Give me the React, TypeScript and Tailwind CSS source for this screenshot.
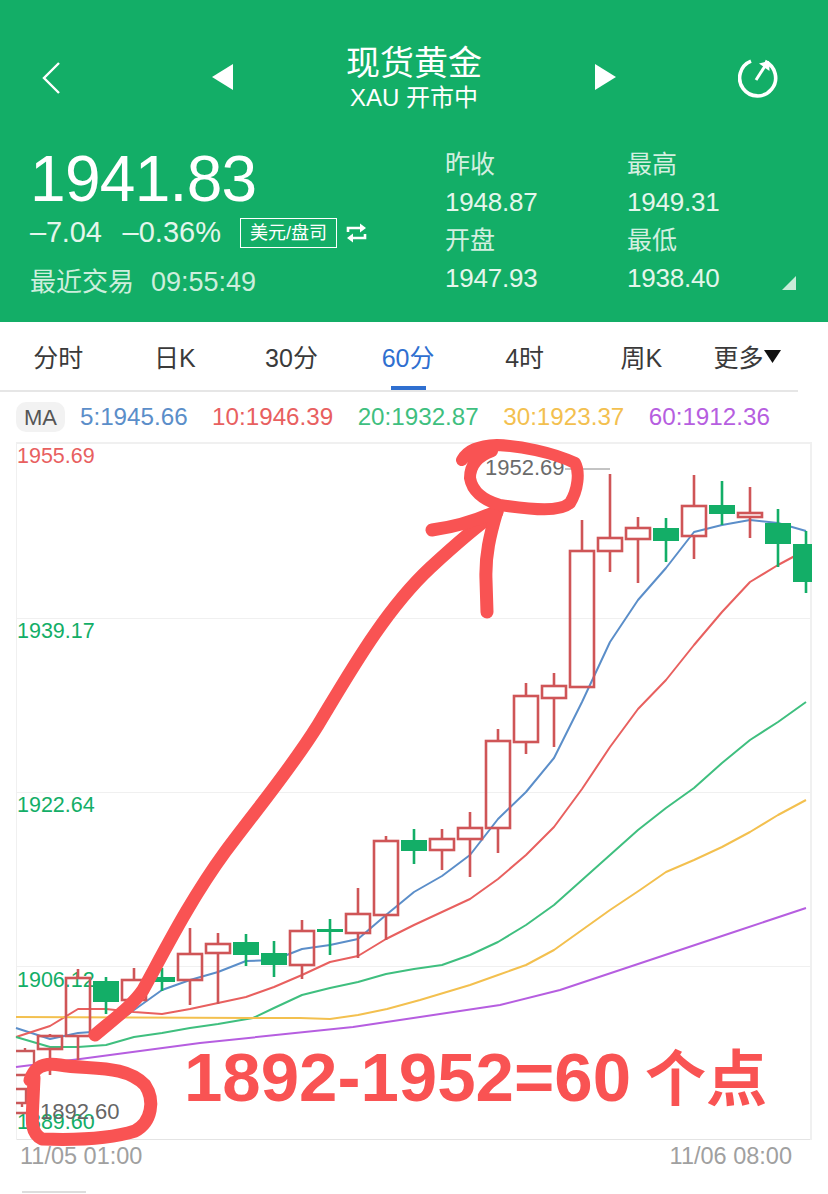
const latin = "font-['Liberation_Sans','Noto_Sans_CJK_SC',sans-serif]";

type Candle = { x: number; top: number; bottom: number; high: number; low: number; down?: boolean };

// page coordinates, read off the reference
const candles: Candle[] = [
  { x: 50, top: 1036, bottom: 1049, high: 1034, low: 1075 },
  { x: 78, top: 978, bottom: 1036, high: 969, low: 1060 },
  { x: 106, top: 981, bottom: 1002, high: 977, low: 1014, down: true },
  { x: 134, top: 980, bottom: 1000, high: 968, low: 1004 },
  { x: 162, top: 977, bottom: 982, high: 968, low: 991, down: true },
  { x: 190, top: 954, bottom: 980, high: 928, low: 1005 },
  { x: 218, top: 944, bottom: 953, high: 933, low: 1004 },
  { x: 246, top: 942, bottom: 955, high: 934, low: 966, down: true },
  { x: 274, top: 953, bottom: 965, high: 941, low: 977, down: true },
  { x: 302, top: 931, bottom: 965, high: 920, low: 979 },
  { x: 330, top: 929, bottom: 932, high: 919, low: 955, down: true },
  { x: 358, top: 914, bottom: 933, high: 888, low: 958 },
  { x: 386, top: 841, bottom: 915, high: 836, low: 940 },
  { x: 414, top: 840, bottom: 851, high: 829, low: 864, down: true },
  { x: 442, top: 839, bottom: 850, high: 829, low: 870 },
  { x: 470, top: 828, bottom: 839, high: 812, low: 877 },
  { x: 498, top: 741, bottom: 828, high: 729, low: 853 },
  { x: 526, top: 696, bottom: 742, high: 683, low: 754 },
  { x: 554, top: 686, bottom: 698, high: 673, low: 747 },
  { x: 582, top: 551, bottom: 687, high: 520, low: 687 },
  { x: 610, top: 538, bottom: 551, high: 474, low: 572 },
  { x: 638, top: 528, bottom: 539, high: 517, low: 583 },
  { x: 666, top: 528, bottom: 541, high: 518, low: 562, down: true },
  { x: 694, top: 506, bottom: 536, high: 475, low: 559 },
  { x: 722, top: 505, bottom: 514, high: 481, low: 525, down: true },
  { x: 750, top: 513, bottom: 517, high: 487, low: 538 },
  { x: 778, top: 523, bottom: 544, high: 509, low: 567, down: true },
];

const maLines = [
  {
    color: '#5b8ec9',
    points:
      '16,1028 50,1039 78,1033 106,1031 134,1010 162,990 190,980 218,972 246,961 274,960 302,949 330,945 358,939 386,915 414,892 442,876 470,855 498,819 526,792 554,758 582,702 610,642 638,600 666,568 694,532 722,525 750,520 778,523 806,531',
  },
  {
    color: '#e8605f',
    points:
      '16,1037 50,1026 78,1009 106,1009 134,1012 162,1014 190,1009 218,1003 246,997 274,987 302,975 330,962 358,956 386,939 414,925 442,912 470,899 498,879 526,855 554,827 582,789 610,747 638,709 666,680 694,645 722,612 750,582 778,565 806,550',
  },
  {
    color: '#3fbf7f',
    points:
      '16,1037 50,1047 78,1047 106,1045 134,1037 162,1033 190,1028 218,1024 253,1018 274,1008 302,995 330,988 358,982 386,974 414,969 442,965 470,955 498,942 526,925 554,905 582,880 610,855 638,830 666,808 694,788 722,763 750,740 778,722 806,702',
  },
  {
    color: '#f3c04f',
    points:
      '16,1017 253,1018 300,1018 330,1019 358,1015 387,1009 420,1000 470,985 498,975 526,965 554,950 582,930 610,910 640,890 666,872 694,860 722,847 750,832 778,815 806,800',
  },
  {
    color: '#b65ee0',
    points: '16,1067 80,1059 200,1043 353,1027 420,1017 500,1005 560,990 620,970 680,950 740,930 806,908',
  },
];

const priceLabels = [
  { text: '1955.69', cls: 'top-[-1px] text-[#e8605f]' },
  { text: '1939.17', cls: 'top-[174px] text-[#13ae67]' },
  { text: '1922.64', cls: 'top-[348px] text-[#13ae67]' },
  { text: '1906.12', cls: 'top-[523px] text-[#13ae67]' },
  { text: '1889.60', cls: 'top-[665px] text-[#13ae67]' },
];

const tabs = ['分时', '日K', '30分', '60分', '4时', '周K'];

const maValues = [
  { text: '5:1945.66', cls: 'text-[#5b8ec9]' },
  { text: '10:1946.39', cls: 'text-[#e8605f]' },
  { text: '20:1932.87', cls: 'text-[#3fbf7f]' },
  { text: '30:1923.37', cls: 'text-[#f3c04f]' },
  { text: '60:1912.36', cls: 'text-[#b65ee0]' },
];

function Stat({ label, value }: { label: string; value: string }) {
  return (
    <div>
      <div className="h-[38px] text-[25px] leading-[38px] text-[#d3efe0]">{label}</div>
      <div className="h-[38px] text-[26px] leading-[38px] tracking-[-0.2px] text-[#e4f6ec]">{value}</div>
    </div>
  );
}

function Chart() {
  return (
    <div className="relative mx-[16px] h-[698px] w-[796px] border-t-2 border-r-2 border-l border-[#f0f0f0]">
      <div className="absolute inset-x-0 top-[174px] h-px bg-[#f0f0f0]" />
      <div className="absolute inset-x-0 top-[348px] h-px bg-[#f0f0f0]" />
      <div className="absolute inset-x-0 top-[522px] h-px bg-[#f0f0f0]" />
      <div className="absolute inset-x-0 bottom-0 h-px bg-[#e4e4e4]" />

      {priceLabels.map((label) => (
        <div key={label.text} className={`absolute left-0 text-[21.5px] leading-[26px] ${label.cls}`}>
          {label.text}
        </div>
      ))}
      <div className="absolute top-[11px] left-[468px] text-[22px] leading-[26px] text-[#6b6b6b]">1952.69</div>
      <div className="absolute top-[655px] left-[23px] text-[22px] leading-[26px] text-[#666]">1892.60</div>

      <svg className="absolute -top-[2px] -left-px overflow-visible" width="796" height="698" viewBox="16 442 796 698" fill="none">
        <path d="M565 469H610" stroke="#888" strokeWidth="1" />
        {maLines.map((line) => (
          <polyline key={line.color} points={line.points} stroke={line.color} strokeWidth="2" strokeLinejoin="round" />
        ))}
        {/* candles cut off by the left edge */}
        <path d="M16 1051H34V1075H16M25 1048V1051M16 1089H26V1103H16M22 1103V1107M16 1113H28" stroke="#c9585a" strokeWidth="2.4" />
        {candles.map((c) =>
          c.down ? (
            <g key={c.x}>
              <path d={`M${c.x} ${c.high}V${c.low}`} stroke="#13ae67" strokeWidth="2.6" />
              <rect x={c.x - 13} y={c.top} width="26" height={c.bottom - c.top} fill="#13ae67" />
            </g>
          ) : (
            <g key={c.x} stroke="#cf5557" strokeWidth="2.6">
              <path d={`M${c.x} ${c.high}V${c.top}M${c.x} ${c.bottom}V${c.low}`} />
              <rect x={c.x - 12} y={c.top} width="24" height={c.bottom - c.top} />
            </g>
          ),
        )}
        <path d="M806 531V593" stroke="#13ae67" strokeWidth="2.6" />
        <rect x="793" y="544" width="19" height="38" fill="#13ae67" />

        <g stroke="#f95353" strokeLinecap="round" strokeLinejoin="round" fill="none">
          {/* arrow */}
          <path
            d="M95 1035 C115 1018 132 1006 143 990 C165 950 190 900 225 852 C260 805 290 770 318 725 C350 672 385 610 430 568 C455 545 478 525 497 512"
            strokeWidth="13"
          />
          <path d="M432 530 C455 527 478 520 497 511 C490 535 485 555 486 580 L487 612" strokeWidth="13" />
          {/* circle round the high */}
          <path
            d="M462 460 C468 450 478 446 497 445 C520 446 552 452 575 463 C580 472 578 490 570 503 C560 512 535 510 500 505 C482 500 472 490 470 478 C470 465 478 456 492 451"
            strokeWidth="12"
          />
          {/* circle round the low */}
          <path
            d="M30 1080 C34 1068 43 1062 60 1065 C90 1070 125 1064 145 1085 C155 1100 152 1122 135 1131 C110 1139 70 1140 42 1139 C30 1133 32 1120 33 1100 L34 1078"
            strokeWidth="13"
          />
        </g>
      </svg>

      <div className="absolute top-[596px] left-[167px] text-[69px] leading-[76px] font-bold whitespace-nowrap text-[#f95353]">
        1892-1952=60<span className="ml-[-3px] text-[61px]"> 个点</span>
      </div>
    </div>
  );
}

export default function App() {
  return (
    <div className={`h-[1194px] w-[828px] overflow-hidden bg-white ${latin}`}>
      <header className="h-[322px] bg-[#13ae67] text-white">
        <div className="flex h-[145px] items-start pt-[42px] pl-[41px]">
          <svg className="mt-[19px]" width="20" height="34" viewBox="0 0 20 34" fill="none">
            <path d="M18 2L3 17L18 32" stroke="#fff" strokeWidth="2.4" />
          </svg>
          <svg className="mt-[22px] ml-[151px]" width="22" height="26" viewBox="0 0 22 26">
            <path d="M21 0V26L0 13Z" fill="#fff" />
          </svg>
          <div className="ml-[110px] flex w-[140px] flex-col items-center">
            <div className="text-[34px] leading-[42px]">现货黄金</div>
            <div className="text-[24px] leading-[28px] whitespace-nowrap">XAU 开市中</div>
          </div>
          <svg className="mt-[22px] ml-[111px]" width="22" height="26" viewBox="0 0 22 26">
            <path d="M0 0V26L21 13Z" fill="#fff" />
          </svg>
          <svg className="mt-[16px] ml-[121px]" width="40" height="40" viewBox="0 0 40 40" fill="none">
            <path d="M27 3.5A18 18 0 1 1 13 3.2" stroke="#fff" strokeWidth="3.6" />
            <path d="M18 22L27 8" stroke="#fff" strokeWidth="3" />
            <path d="M21 5.5L31 3L31.5 13Z" fill="#fff" />
          </svg>
        </div>

        <div className="flex pl-[30px]">
          <div className="w-[415px]">
            <div className="text-[64px] leading-[68px] tracking-[-0.7px]">1941.83</div>
            <div className="mt-[2px] flex h-[36px] items-center text-[#e4f6ec]">
              <span className="text-[29px] tracking-[-0.2px]">–7.04</span>
              <span className="ml-[21px] text-[29px]">–0.36%</span>
              <span className="ml-[19px] flex h-[30px] w-[97px] items-center justify-center border border-white text-[18px] whitespace-nowrap text-white">
                美元/盘司
              </span>
              <svg className="ml-[8px]" width="23" height="20" viewBox="0 0 23 20" fill="none">
                <path d="M3 9V5H17M3 11" stroke="#fff" strokeWidth="2.6" />
                <path d="M15 0.5L21 5L15 9.5Z" fill="#fff" />
                <path d="M20 11V15H6" stroke="#fff" strokeWidth="2.6" />
                <path d="M8 10.5L2 15L8 19.5Z" fill="#fff" />
              </svg>
            </div>
            <div className="mt-[11px] flex h-[40px] items-center text-[#cdeedd]">
              <span className="text-[26px]">最近交易</span>
              <span className="ml-[17px] text-[27px]">09:55:49</span>
            </div>
          </div>
          <div className="w-[182px]">
            <Stat label="昨收" value="1948.87" />
            <Stat label="开盘" value="1947.93" />
          </div>
          <div>
            <Stat label="最高" value="1949.31" />
            <Stat label="最低" value="1938.40" />
          </div>
        </div>
        <div className="-mt-[26px] flex justify-end pr-[32px]">
          <svg width="14" height="14" viewBox="0 0 14 14">
            <path d="M14 0V14H0Z" fill="#c9ecd9" />
          </svg>
        </div>
      </header>

      <nav className="flex h-[70px] w-[798px] items-center border-b-2 border-[#e6e6e6] pt-[5px]">
        {tabs.map((tab) => (
          <div
            key={tab}
            className={`relative flex h-full w-[116.6px] items-center justify-center text-[25px] ${
              tab === '60分' ? 'text-[#2f6fd0]' : 'text-[#3a3a3a]'
            }`}
          >
            {tab}
            {tab === '60分' && <span className="absolute bottom-0 h-[4px] w-[35px] bg-[#2f6fd0]" />}
          </div>
        ))}
        <div className="ml-[14px] flex items-center text-[25px] whitespace-nowrap text-[#3a3a3a]">
          更多
          <svg className="mb-[4px]" width="17" height="13" viewBox="0 0 17 13">
            <path d="M0 0H17L8.5 13Z" fill="#111" />
          </svg>
        </div>
      </nav>

      <div className="flex h-[50px] items-center gap-[24.5px] pl-[16px] text-[24.2px]">
        <span className="-mr-[9.5px] flex h-[30px] w-[49px] items-center justify-center rounded-[10px] bg-[#f2f2f2] text-[22px] text-[#555]">
          MA
        </span>
        {maValues.map((ma) => (
          <span key={ma.text} className={ma.cls}>
            {ma.text}
          </span>
        ))}
      </div>

      <Chart />

      <div className="flex justify-between pt-[3px] pr-[36px] pl-[20px] text-[23.5px] leading-[26px] text-[#a0a0a0]">
        <span>11/05 01:00</span>
        <span>11/06 08:00</span>
      </div>
      <div className="mt-[22px] ml-[22px] h-[2px] w-[64px] bg-[#ddd]" />
    </div>
  );
}
